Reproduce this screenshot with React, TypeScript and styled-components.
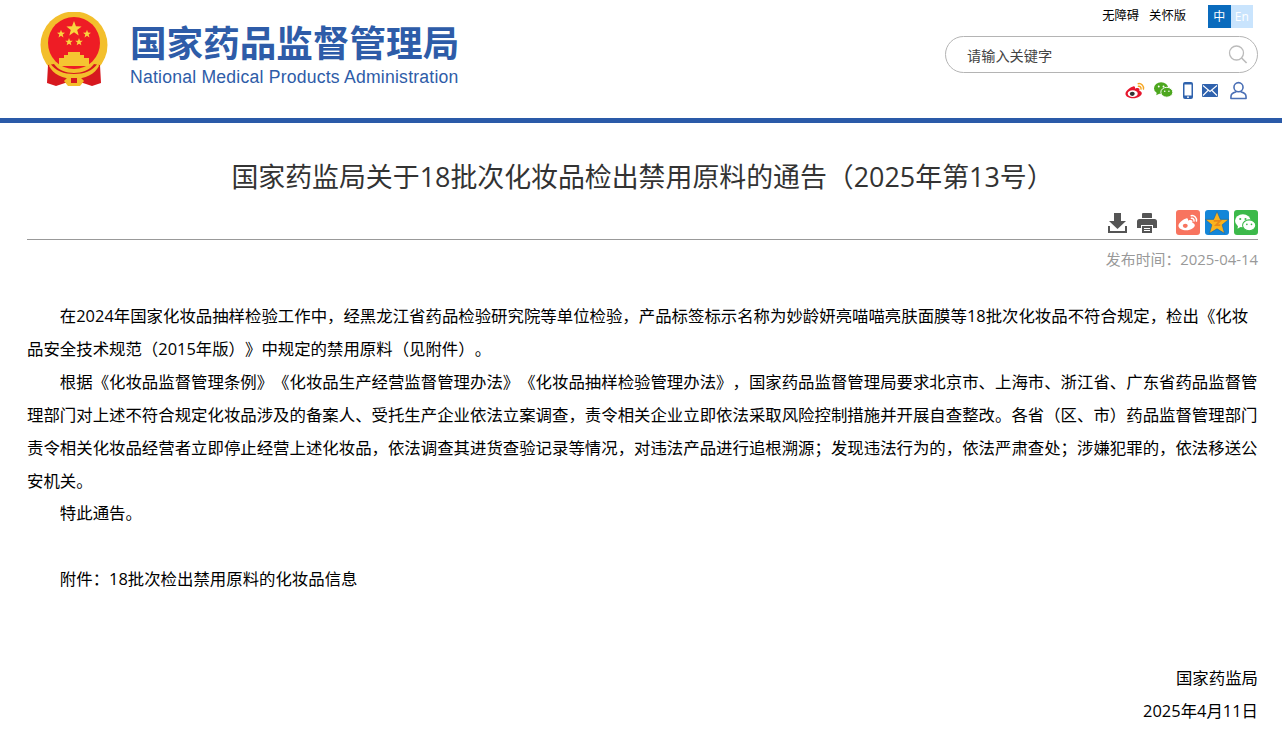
import React from 'react';
import styled, { createGlobalStyle } from 'styled-components';

const GlobalStyle = createGlobalStyle`
  html, body {
    margin: 0;
    padding: 0;
    background: #fff;
    font-family: 'Open Sans', 'Noto Sans CJK SC', sans-serif;
    color: #000;
    text-spacing-trim: space-all;
  }
`;

const Header = styled.header`
  display: flex;
  justify-content: space-between;
  height: 118px;
  border-bottom: 5px solid #2a5aa8;
  padding: 0 24px 0 40px;
`;

const Logo = styled.div`
  display: flex;
  align-items: flex-start;
  gap: 22px;
  padding-top: 12px;
`;

const LogoText = styled.div`
  display: flex;
  flex-direction: column;
  padding-top: 9.500px;
  color: #2e5ca8;
`;

const LogoTitle = styled.div`
  font-family: 'Noto Sans CJK SC', sans-serif;
  font-size: 36.6px;
  line-height: 40px;
  font-weight: 700;
  white-space: nowrap;
`;

const LogoSub = styled.div`
  font-family: 'Liberation Sans', sans-serif;
  font-size: 17.6px;
  line-height: 20px;
  letter-spacing: 0.22px;
  margin-top: 5.500px;
  white-space: nowrap;
`;

const Side = styled.div`
  width: 313px;
  display: flex;
  flex-direction: column;
  align-items: stretch;
`;

const TopLinks = styled.div`
  display: flex;
  justify-content: flex-end;
  align-items: flex-start;
  padding: 5px 5px 0 0;
  height: 36px;
  box-sizing: border-box;
`;

const TopLink = styled.a`
  font-size: 12.3px;
  line-height: 21px;
  color: #000;
  margin-right: 10px;
  &:nth-of-type(2) {
    margin-right: 22px;
  }
`;

const Lang = styled.span<{ $active?: boolean }>`
  width: 22.5px;
  height: 23px;
  font-size: 12px;
  line-height: 23px;
  text-align: center;
  color: #fff;
  background: ${(p) => (p.$active ? '#0a6bbd' : '#c9e4fd')};
`;

const Search = styled.div`
  height: 37px;
  box-sizing: border-box;
  border: 1px solid #b4b4b4;
  border-radius: 19px;
  display: flex;
  align-items: center;
  justify-content: space-between;
  padding: 0 9px 0 21px;
  font-size: 14.2px;
  color: #444;
`;

const SocialRow = styled.div`
  display: flex;
  justify-content: flex-end;
  align-items: center;
  height: 20px;
  margin-top: 7px;
  padding-right: 11px;
  gap: 9.500px;
  svg:last-child {
    margin-left: 2.500px;
  }
`;

const Main = styled.main`
  padding: 0 24px 0 27px;
`;

const Title = styled.h1`
  margin: 0;
  padding-top: 33px;
  font-size: 26.9px;
  line-height: 42px;
  font-weight: 400;
  color: #333;
  text-align: center;
`;

const Tools = styled.div`
  display: flex;
  justify-content: flex-end;
  align-items: center;
  height: 25px;
  margin-top: 12px;
  padding-bottom: 4px;
  border-bottom: 1px solid #999;
`;

const ToolGap = styled.span`
  width: 4.600px;
`;

const ToolIcon = styled.svg`
  display: block;
  margin-right: 10px;
`;

const ShareBox = styled.span<{ $bg: string }>`
  width: 24.500px;
  height: 25px;
  margin-left: 4.300px;
  border-radius: 3px;
  background: ${(p) => p.$bg};
  display: flex;
  align-items: center;
  justify-content: center;
`;

const DateLine = styled.div`
  text-align: right;
  font-size: 14.9px;
  line-height: 20px;
  margin-top: 9px;
  color: #999;
`;

const Article = styled.article`
  margin-top: 31px;
  font-size: 16.42px;
  line-height: 32.900px;
`;

const Para = styled.p`
  margin: 0;
  text-indent: 2em;
`;

const Blank = styled.div`
  height: 32.900px;
`;

const Sign = styled.p`
  margin: 0;
  text-align: right;
`;

const SmallStar = ({ x, y, r }: { x: number; y: number; r: number }) => {
  const pts = Array.from({ length: 10 }, (_, i) => {
    const a = (Math.PI / 5) * i - Math.PI / 2;
    const d = i % 2 === 0 ? r : r * 0.42;
    return `${x + d * Math.cos(a)},${y + d * Math.sin(a)}`;
  }).join(' ');
  return <polygon points={pts} fill="#f9d53e" />;
};

const Emblem = () => (
  <svg width="68" height="76" viewBox="0 0 68 76">
    <circle cx="34" cy="33" r="33.500" fill="#f3bf2c" />
    <circle cx="34" cy="31" r="26" fill="#ee1c25" />
    <SmallStar x={34} y={17} r={8} />
    <SmallStar x={21} y={22} r={4.200} />
    <SmallStar x={47} y={22} r={4.200} />
    <SmallStar x={29} y={30} r={4} />
    <SmallStar x={39} y={30} r={4} />
    <path d="M28 40h12v3h-12zM24 43h20v3H24zM19 46h30v8H19z" fill="#f5c531" />
    <path d="M8 53l6-1c4 6 12 9 20 9s16-3 20-9l6 1 1 18-9 3-9-3H25l-9 3-9-3z" fill="#d7181f" />
    <path d="M10 51c5 8 14 11 24 11s19-3 24-11l1 3c-4 8-14 13-25 13S13 62 9 54z" fill="#f3bf2c" />
    <path d="M24 69c3-4 7-6 10-6s7 2 10 6l-4 5H28z" fill="#f3bf2c" />
    <path d="M31 66h6v5h-6z" fill="#d7181f" />
  </svg>
);

const WeiboIcon = ({ body = '#e6162d', eye = '#333', wave = '#f5a623' }) => (
  <svg width="20" height="17" viewBox="0 0 22 18">
    <path d="M9 4.500C4.500 6 .5 9.500 .5 12.500c0 3 4 5 8.500 5 5.500 0 9.500-3 9.500-5.500 0-2-2-2.500-2.800-2.800.6-1.600.2-3-2-3-1.200 0-2.200.5-2.700.7.300-1.800-.3-3.100-2-2.400z" fill={body} />
    <ellipse cx="8.500" cy="12.500" rx="5.500" ry="3.700" fill="#fff" />
    <ellipse cx="8" cy="12.700" rx="2.700" ry="2.300" fill={eye} />
    <path d="M14.500 1.500c3.500-.6 6.500 2.400 5.800 6M14.800 4.400c1.800-.3 3.200 1.200 2.800 3" fill="none" stroke={wave} strokeWidth="1.600" strokeLinecap="round" />
  </svg>
);

const WechatIcon = ({ color = '#4da71f', gap = '#fff', size = 19 }) => (
  <svg width={size} height={size * 0.85} viewBox="0 0 20 17">
    <ellipse cx="7.500" cy="6.500" rx="7.500" ry="6.200" fill={color} />
    <path d="M3 10.500l-.6 3.500 3.600-2z" fill={color} />
    <ellipse cx="13.500" cy="10.800" rx="6.300" ry="5.200" fill={color} stroke={gap} strokeWidth="1" />
    <circle cx="5" cy="4.800" r="1" fill={gap} />
    <circle cx="10" cy="4.800" r="1" fill={gap} />
    <circle cx="11.300" cy="9.800" r=".8" fill={gap} />
    <circle cx="15.700" cy="9.800" r=".8" fill={gap} />
  </svg>
);

const PhoneIcon = () => (
  <svg width="10" height="17" viewBox="0 0 10 17">
    <rect width="10" height="17" rx="2" fill="#2f62ad" />
    <rect x="1.500" y="2.500" width="7" height="11" fill="#fff" />
    <circle cx="5" cy="15.200" r=".9" fill="#fff" />
  </svg>
);

const MailIcon = () => (
  <svg width="16" height="13" viewBox="0 0 16 13">
    <rect width="16" height="13" rx="1" fill="#2f62ad" />
    <path d="M1 1.500l7 6 7-6M1 11.500l5-5M15 11.500l-5-5" fill="none" stroke="#fff" strokeWidth="1.100" />
  </svg>
);

const UserIcon = () => (
  <svg width="17" height="19" viewBox="0 0 18 19">
    <circle cx="9" cy="6" r="4.800" fill="none" stroke="#4a6fb5" strokeWidth="1.700" />
    <path d="M1 18v-2c0-3 3-4.500 5-5M17 18v-2c0-3-3-4.500-5-5M1 18h16" fill="none" stroke="#4a6fb5" strokeWidth="1.700" strokeLinecap="round" />
  </svg>
);

const App = () => (
  <>
    <GlobalStyle />
    <Header>
      <Logo>
        <Emblem />
        <LogoText>
          <LogoTitle>国家药品监督管理局</LogoTitle>
          <LogoSub>National Medical Products Administration</LogoSub>
        </LogoText>
      </Logo>
      <Side>
        <TopLinks>
          <TopLink>无障碍</TopLink>
          <TopLink>关怀版</TopLink>
          <Lang $active>中</Lang>
          <Lang>En</Lang>
        </TopLinks>
        <Search>
          <span>请输入关键字</span>
          <svg width="20" height="20" viewBox="0 0 20 20">
            <circle cx="8.500" cy="8" r="7" fill="none" stroke="#bbb" strokeWidth="1.300" />
            <path d="M13.600 13l5 5" stroke="#bbb" strokeWidth="1.600" />
          </svg>
        </Search>
        <SocialRow>
          <WeiboIcon />
          <WechatIcon />
          <PhoneIcon />
          <MailIcon />
          <UserIcon />
        </SocialRow>
      </Side>
    </Header>
    <Main>
      <Title>国家药监局关于18批次化妆品检出禁用原料的通告（2025年第13号）</Title>
      <Tools>
        <ToolIcon width="19" height="20" viewBox="0 0 19 20">
          <path d="M6 0h7v8h5l-8.500 8L1 8h5z" fill="#555" />
          <path d="M1 13v6h17v-6" fill="none" stroke="#555" strokeWidth="2" />
        </ToolIcon>
        <ToolIcon width="20" height="20" viewBox="0 0 20 20">
          <path d="M5 1a1 1 0 0 1 1-1h8a1 1 0 0 1 1 1v4H5z" fill="#555" />
          <path d="M2.500 6h15A2.500 2.500 0 0 1 20 8.500V15h-4v-3H4v3H0V8.500A2.500 2.500 0 0 1 2.500 6z" fill="#555" />
          <path d="M5 13h10v7H5z" fill="#555" />
          <path d="M7 15h6v1H7zM7 17h6v1H7z" fill="#fff" />
        </ToolIcon>
        <ToolGap />
        <ShareBox $bg="#f8745f">
          <WeiboIcon body="#fff" eye="#f8745f" wave="#fff" />
        </ShareBox>
        <ShareBox $bg="#1486d8">
          <svg width="24" height="24" viewBox="0 0 22 22">
            <path d="M11 .5l3.100 7.200H21.700l-6 5 2.200 7.800L11 16.300 4.100 20.500l2.200-7.800-6-5H7.900z" fill="#f9b21d" stroke="#0c5fa8" strokeWidth=".5" />
            <path d="M8 9h6l-4 4h4" fill="none" stroke="#e8871a" strokeWidth="1.500" />
          </svg>
        </ShareBox>
        <ShareBox $bg="#3cb94a">
          <WechatIcon color="#fff" gap="#3cb94a" size={21} />
        </ShareBox>
      </Tools>
      <DateLine>发布时间：2025-04-14</DateLine>
      <Article>
        <Para>在2024年国家化妆品抽样检验工作中，经黑龙江省药品检验研究院等单位检验，产品标签标示名称为妙龄妍亮喵喵亮肤面膜等18批次化妆品不符合规定，检出《化妆品安全技术规范（2015年版）》中规定的禁用原料（见附件）。</Para>
        <Para>根据《化妆品监督管理条例》《化妆品生产经营监督管理办法》《化妆品抽样检验管理办法》，国家药品监督管理局要求北京市、上海市、浙江省、广东省药品监督管理部门对上述不符合规定化妆品涉及的备案人、受托生产企业依法立案调查，责令相关企业立即依法采取风险控制措施并开展自查整改。各省（区、市）药品监督管理部门责令相关化妆品经营者立即停止经营上述化妆品，依法调查其进货查验记录等情况，对违法产品进行追根溯源；发现违法行为的，依法严肃查处；涉嫌犯罪的，依法移送公安机关。</Para>
        <Para>特此通告。</Para>
        <Blank />
        <Para>附件：18批次检出禁用原料的化妆品信息</Para>
        <Blank />
        <Blank />
        <Sign>国家药监局</Sign>
        <Sign>2025年4月11日</Sign>
      </Article>
    </Main>
  </>
);

export default App;
